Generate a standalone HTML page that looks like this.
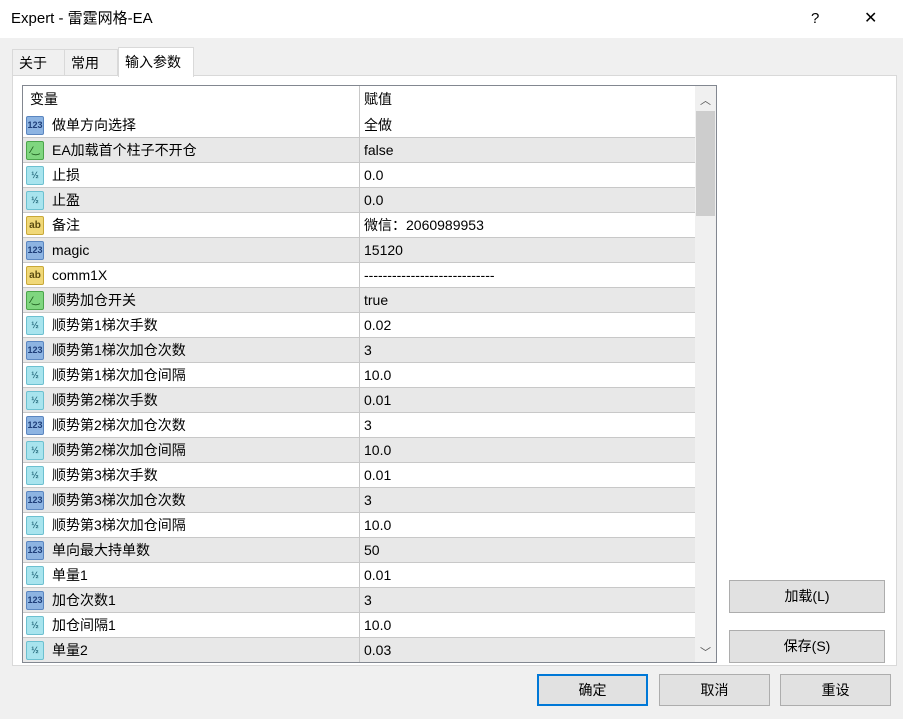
<!DOCTYPE html>
<html><head><meta charset="utf-8"><style>
*{margin:0;padding:0;box-sizing:border-box}
body{width:903px;height:719px;background:#f0f0f0;font-family:"Liberation Sans","Noto Sans CJK SC",sans-serif;font-size:14px;color:#000;position:relative;overflow:hidden}
.abs{position:absolute}
#title{left:0;top:0;width:903px;height:38px;background:#fff}
#title span{position:absolute;left:11px;top:0;line-height:38px;font-size:15px}
.tab{position:absolute;top:49px;height:27px;border:1px solid #d9d9d9;border-bottom:none;background:#f0f0f0;font-size:14px;padding:0 6px;line-height:27px}
#panel{left:12px;top:75px;width:885px;height:591px;background:#fff;border:1px solid #d9d9d9}
#list{left:22px;top:85px;width:695px;height:578px;border:1px solid #828790;background:#fff;overflow:hidden}
.row{position:absolute;left:0;width:672px;height:25px;border-bottom:1px solid #c8c8c8}
.row.g{background:#e8e8e8}
.row .n{position:absolute;left:29px;top:0;line-height:24px;height:24px}
.row .v{position:absolute;left:341px;top:0;line-height:24px;height:24px}
.row .d{position:absolute;left:336px;top:0;height:25px;border-left:1px solid #c8c8c8}
.ic{position:absolute;left:3px;top:3px;width:18px;height:19px;border-radius:2px;font-size:9px;font-weight:bold;text-align:center;line-height:17px;font-family:"Liberation Sans",sans-serif}
.i1{background:#8db4e2;color:#1f3f7a;border:1px solid #5a86c0}
.i2{background:#7fd67f;color:#1a5a1a;border:1px solid #4aa44a}
.i3{background:#a8e4ee;color:#2a6f80;border:1px solid #6cc0d0}
.i4{background:#f0d878;color:#5a4a10;border:1px solid #c8a838;font-size:10px}
#sb{left:672px;top:0;width:21px;height:576px;background:#f0f0f0}
.btn{position:absolute;background:#e1e1e1;border:1px solid #adadad;text-align:center;font-size:14px}
</style></head><body>
<div id="title" class="abs"><span>Expert - 雷霆网格-EA</span>
<span style="left:811px">?</span>
<span style="left:864px;font-size:16px">✕</span></div>
<div class="tab" style="left:12px;width:53px">关于</div>
<div class="tab" style="left:64px;width:54px">常用</div>
<div id="panel" class="abs"></div>
<div class="tab" style="left:118px;top:47px;height:30px;width:76px;background:#fff;line-height:28px">输入参数</div>
<div id="list" class="abs">
<div class="row" style="top:0;height:27px;border-bottom:none"><span class="n" style="left:7px;line-height:27px;height:27px">变量</span><span class="d" style="height:27px"></span><span class="v" style="line-height:27px;height:27px">赋值</span></div>
<div id="rows"></div>
<div id="sb" class="abs">
<div class="abs" style="left:5px;top:6px;font-size:11px;color:#555">︿</div>
<div class="abs" style="left:1px;top:25px;width:19px;height:105px;background:#cdcdcd"></div>
<div class="abs" style="left:5px;top:558px;font-size:11px;color:#555">﹀</div>
</div>
</div>
<div class="btn" style="left:729px;top:580px;width:156px;height:33px;line-height:31px">加载(L)</div>
<div class="btn" style="left:729px;top:630px;width:156px;height:33px;line-height:31px">保存(S)</div>
<div class="btn" style="left:537px;top:674px;width:111px;height:32px;line-height:28px;border:2px solid #0078d7">确定</div>
<div class="btn" style="left:659px;top:674px;width:111px;height:32px;line-height:30px">取消</div>
<div class="btn" style="left:780px;top:674px;width:111px;height:32px;line-height:30px">重设</div>
<script>
var d=[[1,"做单方向选择","全做"],[2,"EA加载首个柱子不开仓","false"],[3,"止损","0.0"],[3,"止盈","0.0"],[4,"备注","微信：2060989953"],[1,"magic","15120"],[4,"comm1X","----------------------------"],[2,"顺势加仓开关","true"],[3,"顺势第1梯次手数","0.02"],[1,"顺势第1梯次加仓次数","3"],[3,"顺势第1梯次加仓间隔","10.0"],[3,"顺势第2梯次手数","0.01"],[1,"顺势第2梯次加仓次数","3"],[3,"顺势第2梯次加仓间隔","10.0"],[3,"顺势第3梯次手数","0.01"],[1,"顺势第3梯次加仓次数","3"],[3,"顺势第3梯次加仓间隔","10.0"],[1,"单向最大持单数","50"],[3,"单量1","0.01"],[1,"加仓次数1","3"],[3,"加仓间隔1","10.0"],[3,"单量2","0.03"]];
var t={1:"123",2:"⁄‿",3:"½",4:"ab"},h="";
d.forEach(function(r,i){h+='<div class="row'+(i%2?' g':'')+'" style="top:'+(27+25*i)+'px"><span class="ic i'+r[0]+'">'+t[r[0]]+'</span><span class="n">'+r[1]+'</span><span class="d"></span><span class="v">'+r[2]+'</span></div>';});
document.getElementById("rows").innerHTML=h;
</script>
</body></html>
